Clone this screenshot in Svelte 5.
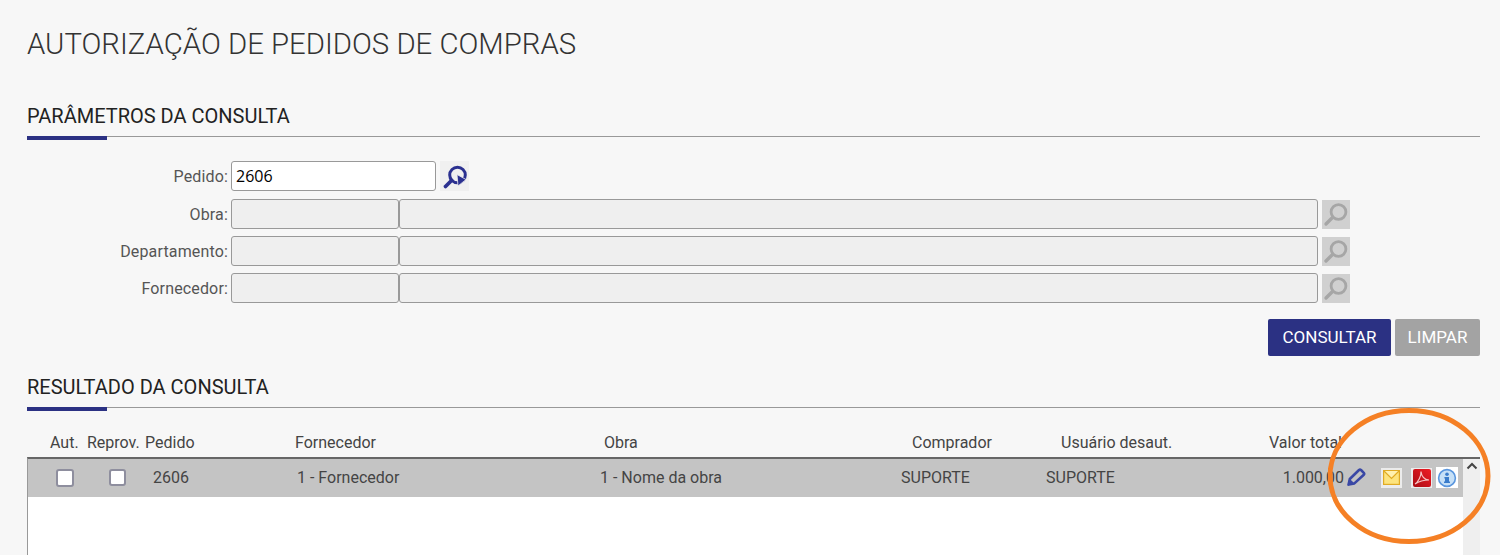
<script>
  const filters = [
    { label: 'Obra' },
    { label: 'Departamento' },
    { label: 'Fornecedor' }
  ];

  const headers = [
    { text: 'Aut.', cls: 'h-aut' },
    { text: 'Reprov.', cls: 'h-rep' },
    { text: 'Pedido', cls: 'h-ped' },
    { text: 'Fornecedor', cls: 'h-for' },
    { text: 'Obra', cls: 'h-obr' },
    { text: 'Comprador', cls: 'h-com' },
    { text: 'Usuário desaut.', cls: 'h-usu' },
    { text: 'Valor total', cls: 'h-val' }
  ];
</script>

<div class="page">
  <h1>AUTORIZAÇÃO DE PEDIDOS DE COMPRAS</h1>

  <h2 class="section first">PARÂMETROS DA CONSULTA</h2>

  <div class="form">
    <div class="row">
      <label for="pedido">Pedido:</label>
      <input id="pedido" class="pedido" value="2606" />
      <button class="lookup active" aria-label="Pesquisar pedido">
        <svg width="29" height="30" viewBox="0 0 29 30">
          <circle cx="17.5" cy="14" r="7.8" fill="none" stroke="#2b3190" stroke-width="3" />
          <path d="M11.5 19.5 L5.5 25.5" stroke="#2b3190" stroke-width="3.8" stroke-linecap="round" />
          <path d="M17 13.5 L26 18.5 L18 25 Z" fill="#2b3190" stroke="#f0f0f0" stroke-width="0.8" />
        </svg>
      </button>
    </div>
    {#each filters as filter}
      <div class="row">
        <label for={filter.label}>{filter.label}:</label>
        <input id={filter.label} class="code" disabled />
        <input class="desc" aria-label={filter.label} disabled />
        <button class="lookup" aria-label="Pesquisar" disabled>
          <svg width="28" height="29" viewBox="0 0 28 29">
            <circle cx="16.5" cy="12" r="7.4" fill="none" stroke="#a6a6a6" stroke-width="2.8" />
            <path d="M10.5 17.5 L4 24" stroke="#a6a6a6" stroke-width="3.4" stroke-linecap="round" />
          </svg>
        </button>
      </div>
    {/each}
  </div>

  <div class="actions">
    <button class="btn primary">CONSULTAR</button>
    <button class="btn muted">LIMPAR</button>
  </div>

  <h2 class="section">RESULTADO DA CONSULTA</h2>

  <div class="thead">
    {#each headers as h}
      <span class={h.cls}>{h.text}</span>
    {/each}
  </div>

  <div class="tbody">
    <div class="rows">
      <div class="tr">
        <span class="c-aut"><input type="checkbox" class="big" aria-label="Autorizar" /></span>
        <span class="c-rep"><input type="checkbox" aria-label="Reprovar" /></span>
        <span>2606</span>
        <span>1 - Fornecedor</span>
        <span>1 - Nome da obra</span>
        <span>SUPORTE</span>
        <span>SUPORTE</span>
        <span class="c-val">1.000,00</span>
        <span class="c-ico">
          <svg class="pencil" width="20" height="19" viewBox="0 0 20 19">
            <path d="M2.6 16.6 L3.8 11 L13 2 Q14 1.2 15 2 L17.8 4.8 Q18.6 5.8 17.8 6.8 L8.4 15.4 Z" fill="none" stroke="#3a48a5" stroke-width="2.6" stroke-linejoin="round" />
            <path d="M1.4 17.8 L3.4 10.6 L8.8 15.8 Z" fill="#3a48a5" />
          </svg>
          <span class="tile mail">
            <svg width="17" height="15" viewBox="0 0 17 15">
              <rect x="0.6" y="0.6" width="15.8" height="13.8" fill="#fde47e" stroke="#e0ab25" stroke-width="1.2" />
              <path d="M1 1 L8.5 8.5 L16 1" fill="#fff1b0" stroke="#e0ab25" stroke-width="1.2" />
            </svg>
          </span>
          <span class="tile pdf">
            <svg width="18" height="18" viewBox="0 0 18 18">
              <defs>
                <linearGradient id="pdf-red" x1="1" y1="0" x2="0" y2="1">
                  <stop offset="0" stop-color="#f01c24" />
                  <stop offset="1" stop-color="#a80c14" />
                </linearGradient>
              </defs>
              <rect width="18" height="18" rx="2" fill="url(#pdf-red)" />
              <path d="M2 15 C5 13 8.5 7 8 2.5 C8.5 7 11.5 10.5 16 11 C11.5 11 6.5 12 2 15 Z" fill="none" stroke="#f6c4c4" stroke-width="1.2" />
            </svg>
          </span>
          <span class="tile info">
            <svg width="20" height="20" viewBox="0 0 20 20">
              <circle cx="10" cy="10" r="8.4" fill="#c6e0f7" stroke="#5a96de" stroke-width="1.6" />
              <circle cx="10" cy="6.2" r="1.8" fill="#3a7ccb" />
              <path d="M7.4 9 H12 V13.4 H13 V15 H7 V13.4 H8 V10.4 H7.4 Z" fill="#3a7ccb" />
            </svg>
          </span>
        </span>
      </div>
    </div>
    <div class="scrollbar">
      <svg width="12" height="8" viewBox="0 0 12 8">
        <path d="M1.5 6.5 L6 2 L10.5 6.5" fill="none" stroke="#444" stroke-width="2" />
      </svg>
    </div>
  </div>

  <svg class="highlight" width="170" height="140" viewBox="0 0 170 140">
    <ellipse cx="81" cy="68" rx="79" ry="65.5" fill="none" stroke="#f58025" stroke-width="5" />
  </svg>
</div>

<style>
  :global(body) {
    margin: 0;
    background: #f7f7f7;
  }

  .page {
    position: relative;
    box-sizing: border-box;
    height: 555px;
    overflow: hidden;
    padding: 0 20px 0 27px;
    font-family: Roboto, "Liberation Sans", sans-serif;
    font-size: 16px;
    color: #444;
  }

  h1 {
    margin: 0;
    padding-top: 26px;
    font-size: 29.33px;
    line-height: 36px;
    font-weight: 300;
    color: #333;
  }

  .section {
    position: relative;
    margin: 18px 0 0;
    height: 33px;
    line-height: 26px;
    font-size: 20px;
    font-weight: 400;
    color: #222;
    border-bottom: 1px solid #999;
  }

  .section::after {
    content: '';
    position: absolute;
    left: 0;
    bottom: -4px;
    width: 80px;
    height: 4px;
    background: #2b3183;
  }

  .section.first {
    margin-top: 41px;
  }

  .form {
    display: flex;
    flex-direction: column;
    gap: 7px;
    margin-top: 24px;
  }

  .row {
    display: flex;
    align-items: center;
    height: 30px;
  }

  .row:first-child {
    margin-bottom: 1px;
  }

  label {
    width: 201px;
    padding-right: 3px;
    text-align: right;
    letter-spacing: 0.15px;
    color: #555;
  }

  input:not([type='checkbox']) {
    box-sizing: border-box;
    height: 100%;
    padding: 0 4px;
    border: 1px solid #999;
    border-radius: 3px;
    font: 16px "Open Sans", sans-serif;
    color: #000;
    background: #fff;
  }

  input:not([type='checkbox']):disabled {
    background: #efefef;
  }

  .pedido {
    width: 205px;
  }

  .code {
    width: 168px;
  }

  .desc {
    width: 919px;
  }

  .lookup {
    display: flex;
    align-items: center;
    justify-content: center;
    width: 28px;
    height: 29px;
    margin-left: 4px;
    padding: 0;
    border: 0;
    background: #d0d0d0;
  }

  .lookup.active {
    width: 29px;
    height: 30px;
    background: #f0f0f0;
  }

  .actions {
    display: flex;
    justify-content: flex-end;
    gap: 4px;
    margin-top: 16px;
  }

  .btn {
    height: 37px;
    padding: 0 0 2px;
    border: 0;
    border-radius: 2px;
    font: inherit;
    font-size: 17px;
    color: #fff;
  }

  .primary {
    width: 123px;
    background: #2b3183;
  }

  .muted {
    width: 85px;
    background: #a3a3a3;
  }

  .thead {
    position: relative;
    height: 49px;
    color: #444;
  }

  .thead span {
    position: absolute;
    top: 25px;
    line-height: 20px;
  }

  .h-aut { left: 23px; }
  .h-rep { left: 60px; }
  .h-ped { left: 118px; }
  .h-for { left: 268px; }
  .h-obr { left: 577px; }
  .h-com { left: 885px; }
  .h-usu { left: 1034px; }
  .h-val { left: 1242px; }

  .tbody {
    display: flex;
    height: 110px;
    background: #fff;
    border-top: 2px solid #666;
    border-left: 1px solid #999;
  }

  .rows {
    flex: 1;
  }

  .tr {
    display: grid;
    grid-template-columns: 72px 53px 144px 303px 301px 145px 177px 121px 1fr;
    align-items: center;
    height: 38px;
    padding-bottom: 1px;
    box-sizing: border-box;
    background: #c4c4c4;
    color: #444;
  }

  .c-aut, .c-rep {
    display: flex;
  }

  .c-aut { padding-left: 28px; }
  .c-rep { padding-left: 9px; }
  .c-val { text-align: right; }

  input[type='checkbox'] {
    appearance: none;
    box-sizing: border-box;
    width: 17px;
    height: 17px;
    margin: 0;
    background: #fff;
    border: 2px solid #8e8e9e;
    border-radius: 3px;
  }

  input[type='checkbox'].big {
    width: 18px;
    height: 18px;
  }

  .c-ico {
    display: flex;
    align-items: center;
  }

  .pencil {
    margin-left: 2px;
    margin-right: 1px;
  }

  .tile {
    display: flex;
    align-items: center;
    justify-content: center;
    width: 21px;
    height: 20px;
    background: #ececec;
  }

  .mail { margin-left: 14px; }
  .pdf { margin-left: 9px; }
  .info { margin-left: 4px; width: 22px; height: 21px; background: #fff; }

  .scrollbar {
    display: flex;
    justify-content: center;
    box-sizing: border-box;
    width: 17px;
    height: 100%;
    padding-top: 3px;
    background: #efefef;
  }

  .scrollbar svg {
    display: block;
  }

  .highlight {
    position: absolute;
    left: 1328px;
    top: 408px;
  }
</style>
